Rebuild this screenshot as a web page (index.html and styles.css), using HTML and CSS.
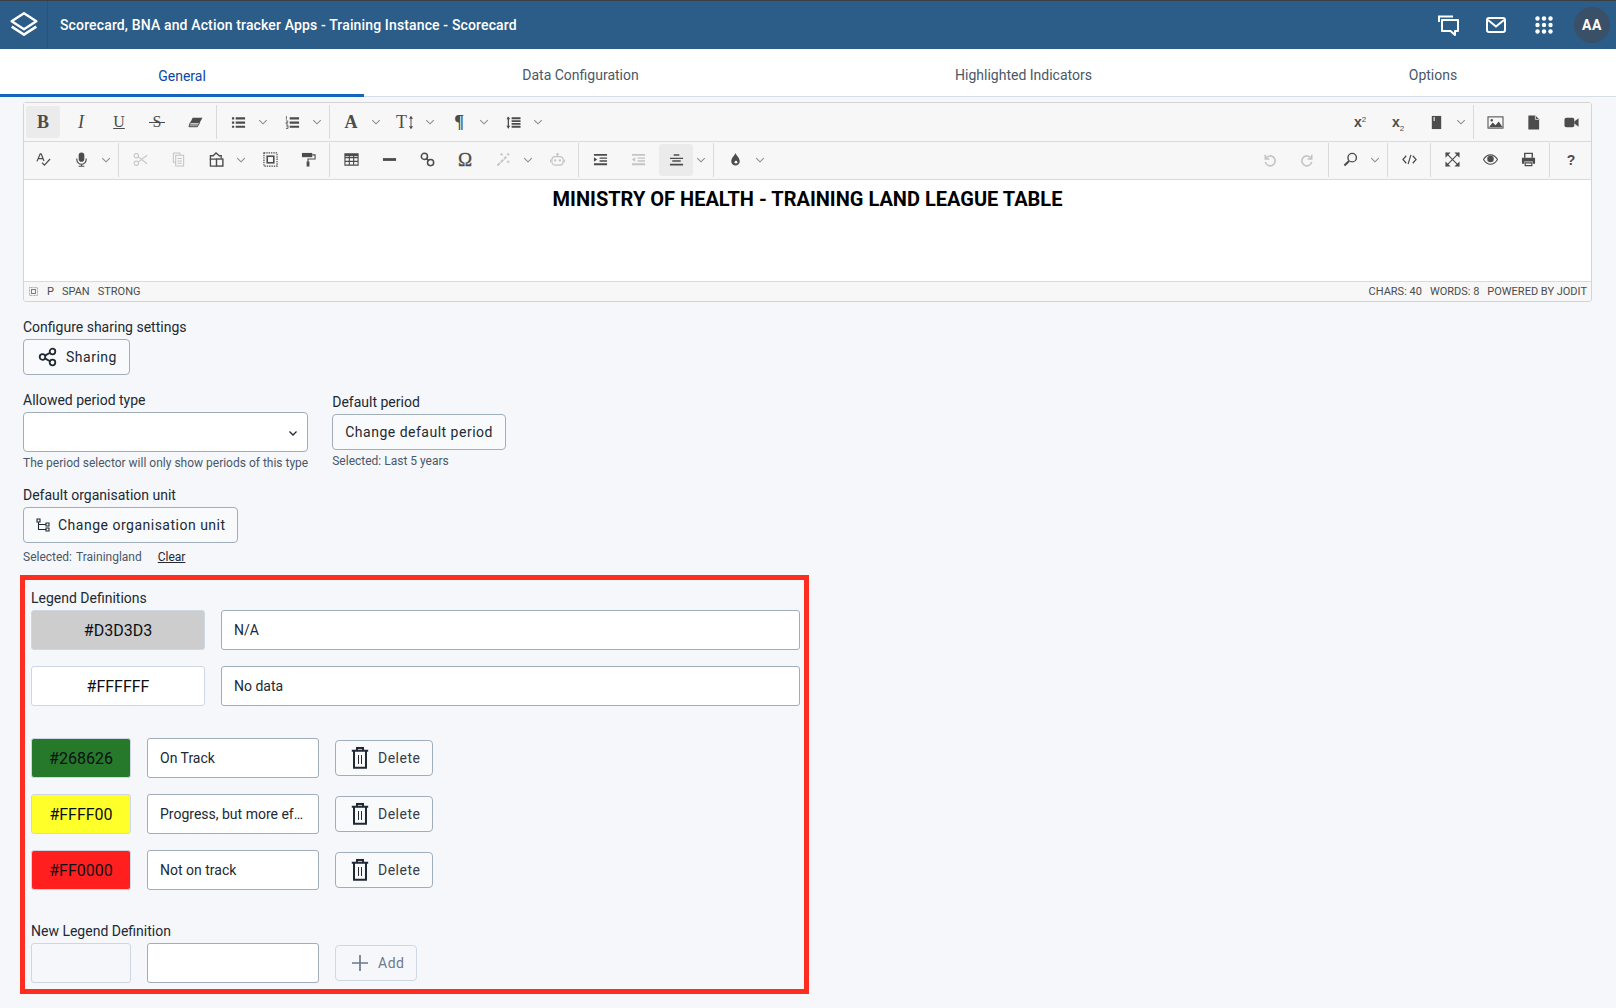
FILE: index.html
```html
<!DOCTYPE html>
<html lang="en">
<head>
<meta charset="utf-8">
<title>Scorecard</title>
<link rel="stylesheet" href="styles.css">
</head>
<body>
<svg class="defs" aria-hidden="true">
  <symbol id="chev" viewBox="0 0 16 16"><path d="M3 5.500l5 5 5-5" fill="none" stroke="currentColor" stroke-width="1.400"/></symbol>
  <symbol id="eraser" viewBox="0 0 16 16"><path d="M5 3h10.500l-3 5H2.500z" fill="currentColor"/><path d="M2.500 8h10L10 12.500H1z" fill="none" stroke="currentColor" stroke-width="1"/><path d="M2 9h10l-2.300 3.500H1z" fill="currentColor" opacity=".55"/></symbol>
  <symbol id="ul" viewBox="0 0 16 16"><path d="M1 2.500h2.400v2.200H1zM1 7h2.400v2.200H1zM1 11.500h2.400v2.200H1zM5 2.500h10v2.200H5zM5 7h10v2.200H5zM5 11.500h10v2.200H5z" fill="currentColor"/></symbol>
  <symbol id="ol" viewBox="0 0 16 16"><path d="M5 2.500h10v2.200H5zM5 7h10v2.200H5zM5 11.500h10v2.200H5z" fill="currentColor"/><path d="M1.500 1v4M1 6.300h2v1.600H1.200v1.500h2M1 10.800h2.200v3.600H1M1.500 12.600h1.600" fill="none" stroke="currentColor" stroke-width=".8"/></symbol>
  <symbol id="lh" viewBox="0 0 16 16"><path d="M6 2.500h9.500v2H6zM6 5.500h9.500v2H6zM6 8.500h9.500v2H6zM6 11.500h9.500v2H6z" fill="currentColor"/><path d="M2.500 2v12" stroke="currentColor" stroke-width="1.400"/><path d="M.5 4.500l2-3 2 3zM.5 11.500l2 3 2-3z" fill="currentColor"/></symbol>
  <symbol id="spell" viewBox="0 0 16 16"><path d="M1 10L4.500 2h1l3 7.500M2.500 7h4.500" fill="none" stroke="currentColor" stroke-width="1.300"/><path d="M6.500 11.500L9 14l6-6.500" fill="none" stroke="currentColor" stroke-width="1.300"/></symbol>
  <symbol id="mic" viewBox="0 0 16 16"><rect x="5" y="0.500" width="6" height="10" rx="3" fill="currentColor"/><path d="M3 7v1a5 5 0 0010 0V7M8 13v2M5 15.200h6" fill="none" stroke="currentColor" stroke-width="1.200"/></symbol>
  <symbol id="cut" viewBox="0 0 16 16"><circle cx="3.500" cy="4" r="2.300" fill="none" stroke="currentColor" stroke-width="1.100"/><circle cx="3.500" cy="12" r="2.300" fill="none" stroke="currentColor" stroke-width="1.100"/><path d="M5.500 5.200L15 12.500M5.500 10.800L15 3.500" fill="none" stroke="currentColor" stroke-width="1.100"/></symbol>
  <symbol id="copy" viewBox="0 0 16 16"><path d="M2.500 1h7v2.500M5 3.500h8.500V15H5zM2.500 1v10H5M7 7h4.500M7 9.500h4.500M7 12h4.500" fill="none" stroke="currentColor" stroke-width="1.100"/></symbol>
  <symbol id="paste" viewBox="0 0 16 16"><path d="M8 7.500H1.500V4h3L7.500 1l3.500 3h2V7" fill="none" stroke="currentColor" stroke-width="1.400"/><path d="M1.500 7v8H8" fill="none" stroke="currentColor" stroke-width="1.400"/><rect x="8" y="7.500" width="6.800" height="7.500" fill="none" stroke="currentColor" stroke-width="1.500"/></symbol>
  <symbol id="select" viewBox="0 0 16 16"><rect x="1" y="1" width="14" height="14" fill="none" stroke="currentColor" stroke-width="1.300" stroke-dasharray="1.500 1"/><rect x="4.500" y="4.500" width="7" height="7" fill="none" stroke="currentColor" stroke-width="1.700"/></symbol>
  <symbol id="paint" viewBox="0 0 16 16"><path d="M1 1h11v4.500H1z" fill="currentColor"/><path d="M12 3h3v4.500H7.500V10" fill="none" stroke="currentColor" stroke-width="1.200"/><path d="M6 10h3v5.500H6z" fill="currentColor"/></symbol>
  <symbol id="table" viewBox="0 0 16 16"><path d="M1 2h14v12H1zM1 6h14M1 10h14M5.700 2v12M10.300 2v12" fill="none" stroke="currentColor" stroke-width="1.200"/><path d="M1 2h14v2.500H1z" fill="currentColor"/></symbol>
  <symbol id="hr" viewBox="0 0 16 16"><path d="M1 6.500h14v3H1z" fill="currentColor"/></symbol>
  <symbol id="link" viewBox="0 0 16 16"><circle cx="4.700" cy="4.700" r="3.300" fill="none" stroke="currentColor" stroke-width="1.600"/><circle cx="11.300" cy="11.300" r="3.300" fill="none" stroke="currentColor" stroke-width="1.600"/><path d="M6.500 6.500l3 3" stroke="currentColor" stroke-width="1.600"/></symbol>
  <symbol id="magic" viewBox="0 0 16 16"><path d="M1.500 14.500L11 5" stroke="currentColor" stroke-width="2" stroke-dasharray="4 1"/><path d="M6 1v3M4.500 2.500h3M13 1v3M11.500 2.500h3M13 9v3M11.500 10.500h3" stroke="currentColor" stroke-width="1"/></symbol>
  <symbol id="robot" viewBox="0 0 16 16"><rect x="2" y="5" width="12" height="9" rx="3.500" fill="none" stroke="currentColor" stroke-width="1.300"/><circle cx="8" cy="2.300" r="1.300" fill="currentColor"/><path d="M8 3v2M0.500 8v3M15.500 8v3" stroke="currentColor" stroke-width="1.100"/><circle cx="5.500" cy="9" r="1.200" fill="currentColor"/><circle cx="10.500" cy="9" r="1.200" fill="currentColor"/></symbol>
  <symbol id="indent" viewBox="0 0 16 16"><path d="M1 2h14v2H1zM7 5.800h8v1.500H7zM7 8.800h8v1.500H7zM1 12h14v2H1zM1 5.500L4.500 8 1 10.500z" fill="currentColor"/></symbol>
  <symbol id="outdent" viewBox="0 0 16 16"><path d="M1 2h14v2H1zM7 5.800h8v1.500H7zM7 8.800h8v1.500H7zM1 12h14v2H1zM4.500 5.500L1 8l3.500 2.500z" fill="currentColor"/></symbol>
  <symbol id="center" viewBox="0 0 16 16"><path d="M1 12.500h14v2H1zM3.500 8.700h9v1.600h-9zM1 6h14v1.500H1zM5 2.500h6v1.600H5z" fill="currentColor"/></symbol>
  <symbol id="drop" viewBox="0 0 16 16"><path d="M8 1c1 3 4.500 5 4.500 9a4.500 4.500 0 01-9 0C3.500 6 7 4 8 1z" fill="currentColor"/><circle cx="8.500" cy="10.800" r="1.500" fill="#f7f7f7"/></symbol>
  <symbol id="book" viewBox="0 0 16 16"><path d="M3 1h10v14H3z" fill="currentColor"/><path d="M5.500 2v4.500" stroke="#f7f7f7" stroke-width="1.200"/></symbol>
  <symbol id="image" viewBox="0 0 18 16"><rect x="1" y="2" width="16" height="12" fill="none" stroke="currentColor" stroke-width="1.100"/><path d="M2 13l4-5 3 3 3.500-4 4 6z" fill="currentColor"/><circle cx="5" cy="5.500" r="1.300" fill="currentColor"/></symbol>
  <symbol id="file" viewBox="0 0 16 16"><path d="M2.500 0.500H10L14 4.500V15.500H2.500z" fill="currentColor"/><path d="M10 0.800v3.900h3.800" fill="none" stroke="#f7f7f7" stroke-width=".8"/></symbol>
  <symbol id="video" viewBox="0 0 16 16"><rect x="0.500" y="3" width="10.500" height="10" rx="2" fill="currentColor"/><path d="M11 7l4.500-3.500v9L11 9z" fill="currentColor"/></symbol>
  <symbol id="undo" viewBox="0 0 16 16"><path d="M3.500 3v4.500H8M4 7a5.300 5.300 0 11-.5 3.500" fill="none" stroke="currentColor" stroke-width="1.700"/></symbol>
  <symbol id="redo" viewBox="0 0 16 16"><path d="M12.500 3v4.500H8M12 7a5.300 5.300 0 10.500 3.500" fill="none" stroke="currentColor" stroke-width="1.700"/></symbol>
  <symbol id="search" viewBox="0 0 16 16"><circle cx="9.800" cy="6" r="4.500" fill="none" stroke="currentColor" stroke-width="1.500"/><path d="M6.500 9.500L1.500 14.500" stroke="currentColor" stroke-width="2.200"/></symbol>
  <symbol id="code" viewBox="0 0 16 16"><path d="M4.500 4L1 8l3.500 4M11.500 4L15 8l-3.500 4M9.500 3L6.500 13" fill="none" stroke="currentColor" stroke-width="1.300"/></symbol>
  <symbol id="full" viewBox="0 0 16 16"><path d="M1 1l14 14M15 1L1 15" stroke="currentColor" stroke-width="1.200"/><path d="M.5.500h5.500L.5 6zM15.500.500H10L15.500 6zM.5 15.500H6L.5 10zM15.500 15.500H10L15.500 10z" fill="currentColor"/></symbol>
  <symbol id="eye" viewBox="0 0 16 16"><path d="M0.500 8C3 4 5.500 3 8 3s5 1 7.500 5c-2.500 4-5 5-7.500 5S3 12 0.500 8z" fill="none" stroke="currentColor" stroke-width="1.200"/><circle cx="8" cy="7.500" r="3.500" fill="currentColor"/></symbol>
  <symbol id="print" viewBox="0 0 16 16"><path d="M4 6V1.500h8V6" fill="none" stroke="currentColor" stroke-width="1.500"/><path d="M1 6h14v6.500h-2.500V10h-9v2.500H1z" fill="currentColor"/><path d="M4.500 11.500h7v3h-7z" fill="none" stroke="currentColor" stroke-width="1.300"/></symbol>
  <symbol id="updown" viewBox="0 0 6 16"><path d="M3 1.500v13" stroke="currentColor" stroke-width="1"/><path d="M.8 4L3 1l2.200 3zM.8 12L3 15l2.200-3z" fill="currentColor"/></symbol>
  <symbol id="trash" viewBox="0 0 18 22"><path d="M6 2.800V1h6v1.800M.8 3.800h16.400M3 3.800V20.800h12V3.800" fill="none" stroke="currentColor" stroke-width="2"/><path d="M7.500 8v9M10.500 8v9" fill="none" stroke="currentColor" stroke-width="1"/></symbol>
</svg>

<header class="topbar">
  <div class="logo-cell">
    <svg class="logo" viewBox="0 0 28 28"><path d="M14 3L25.500 10.500 14 18 2.500 10.500z" fill="none" stroke="#fff" stroke-width="2.300" stroke-linejoin="round"/><path d="M2.500 15.500L14 23l11.500-7.500" fill="none" stroke="#fff" stroke-width="2.300" stroke-linejoin="round"/></svg>
  </div>
  <div class="app-title">Scorecard, BNA and Action tracker Apps - Training Instance - Scorecard</div>
  <div class="top-actions">
    <svg class="top-icon" viewBox="0 0 24 24"><path d="M3 9V3.500h14" fill="none" stroke="#fff" stroke-width="2"/><path d="M6 7h16v11h-3v4l-4.500-4H6z" fill="none" stroke="#fff" stroke-width="2" stroke-linejoin="round"/></svg>
    <svg class="top-icon" viewBox="0 0 24 24"><rect x="3" y="5" width="18" height="14" rx="2" fill="none" stroke="#fff" stroke-width="2"/><path d="M4 7l8 6.500L20 7" fill="none" stroke="#fff" stroke-width="2"/></svg>
    <svg class="top-icon" viewBox="0 0 24 24"><g fill="#fff"><circle cx="5.500" cy="5.500" r="2.200"/><circle cx="12" cy="5.500" r="2.200"/><circle cx="18.500" cy="5.500" r="2.200"/><circle cx="5.500" cy="12" r="2.200"/><circle cx="12" cy="12" r="2.200"/><circle cx="18.500" cy="12" r="2.200"/><circle cx="5.500" cy="18.500" r="2.200"/><circle cx="12" cy="18.500" r="2.200"/><circle cx="18.500" cy="18.500" r="2.200"/></g></svg>
    <div class="avatar">AA</div>
  </div>
</header>

<nav class="tabs">
  <div class="tab active">General</div>
  <div class="tab">Data Configuration</div>
  <div class="tab">Highlighted Indicators</div>
  <div class="tab">Options</div>
</nav>

<main class="page">
  <section class="editor">
    <div class="tb-row">
      <span class="tb on txt serif b xl">B</span><span class="tb txt serif i xl">I</span><span class="tb txt serif u md">U</span><span class="tb txt serif s md">S</span><span class="tb"><svg><use href="#eraser"/></svg></span>
      <i class="sep"></i>
      <span class="tb"><svg><use href="#ul"/></svg></span><span class="ch"><svg><use href="#chev"/></svg></span><span class="tb"><svg><use href="#ol"/></svg></span><span class="ch"><svg><use href="#chev"/></svg></span>
      <i class="sep"></i>
      <span class="tb txt serif b xl">A</span><span class="ch"><svg><use href="#chev"/></svg></span><span class="tb txt serif xl">T<svg class="ud"><use href="#updown"/></svg></span><span class="ch"><svg><use href="#chev"/></svg></span><span class="tb txt b serif xl">¶</span><span class="ch"><svg><use href="#chev"/></svg></span><span class="tb"><svg><use href="#lh"/></svg></span><span class="ch"><svg><use href="#chev"/></svg></span>
      <span class="spacer"></span>
      <span class="tb txt sans b"><span>x<sup>2</sup></span></span><span class="tb txt sans b"><span>x<sub>2</sub></span></span><span class="tb"><svg><use href="#book"/></svg></span><span class="ch"><svg><use href="#chev"/></svg></span>
      <i class="sep"></i>
      <span class="tb"><svg class="wide"><use href="#image"/></svg></span><span class="tb"><svg><use href="#file"/></svg></span><span class="tb"><svg><use href="#video"/></svg></span>
    </div>
    <div class="tb-row second">
      <span class="tb"><svg><use href="#spell"/></svg></span><span class="tb"><svg><use href="#mic"/></svg></span><span class="ch"><svg><use href="#chev"/></svg></span>
      <i class="sep"></i>
      <span class="tb off"><svg><use href="#cut"/></svg></span><span class="tb off"><svg><use href="#copy"/></svg></span><span class="tb"><svg><use href="#paste"/></svg></span><span class="ch"><svg><use href="#chev"/></svg></span><span class="tb"><svg><use href="#select"/></svg></span><span class="tb"><svg><use href="#paint"/></svg></span>
      <i class="sep"></i>
      <span class="tb"><svg><use href="#table"/></svg></span><span class="tb"><svg><use href="#hr"/></svg></span><span class="tb"><svg><use href="#link"/></svg></span><span class="tb txt serif omega">Ω</span><span class="tb off"><svg><use href="#magic"/></svg></span><span class="ch"><svg><use href="#chev"/></svg></span><span class="tb off"><svg><use href="#robot"/></svg></span>
      <i class="sep"></i>
      <span class="tb"><svg><use href="#indent"/></svg></span><span class="tb off"><svg><use href="#outdent"/></svg></span><span class="tb on"><svg><use href="#center"/></svg></span><span class="ch"><svg><use href="#chev"/></svg></span>
      <i class="sep"></i>
      <span class="tb"><svg><use href="#drop"/></svg></span><span class="ch"><svg><use href="#chev"/></svg></span>
      <span class="spacer"></span>
      <span class="tb off"><svg><use href="#undo"/></svg></span><span class="tb off"><svg><use href="#redo"/></svg></span>
      <i class="sep"></i>
      <span class="tb"><svg><use href="#search"/></svg></span><span class="ch"><svg><use href="#chev"/></svg></span>
      <i class="sep"></i>
      <span class="tb"><svg><use href="#code"/></svg></span>
      <i class="sep"></i>
      <span class="tb"><svg><use href="#full"/></svg></span><span class="tb"><svg><use href="#eye"/></svg></span><span class="tb"><svg><use href="#print"/></svg></span>
      <i class="sep"></i>
      <span class="tb txt sans b">?</span>
    </div>
    <div class="ed-body"><p class="ed-title">MINISTRY OF HEALTH - TRAINING LAND LEAGUE TABLE</p></div>
    <div class="ed-status">
      <svg class="sel-ico" viewBox="0 0 16 16"><use href="#select"/></svg>
      <span>P</span><span>SPAN</span><span>STRONG</span>
      <span class="spacer"></span>
      <span>CHARS: 40</span><span>WORDS: 8</span><span>POWERED BY JODIT</span>
    </div>
  </section>

  <div class="field sharing">
    <div class="label">Configure sharing settings</div>
    <button class="btn sharing-btn">
      <svg class="bi" viewBox="0 0 20 20"><circle cx="4.500" cy="10" r="2.800" fill="none" stroke="currentColor" stroke-width="1.800"/><circle cx="14.500" cy="4.500" r="2.800" fill="none" stroke="currentColor" stroke-width="1.800"/><circle cx="14.500" cy="15.500" r="2.800" fill="none" stroke="currentColor" stroke-width="1.800"/><path d="M7 8.600l5-2.800M7 11.400l5 2.800" stroke="currentColor" stroke-width="1.800"/></svg>
      Sharing
    </button>
  </div>

  <div class="period-row">
    <div class="field">
      <div class="label">Allowed period type</div>
      <div class="select"><svg viewBox="0 0 12 12"><path d="M2.500 4.500L6 8l3.500-3.500" fill="none" stroke="currentColor" stroke-width="1.300"/></svg></div>
      <div class="help">The period selector will only show periods of this type</div>
    </div>
    <div class="field default-period">
      <div class="label">Default period</div>
      <button class="btn">Change default period</button>
      <div class="help">Selected: Last 5 years</div>
    </div>
  </div>

  <div class="field org">
    <div class="label">Default organisation unit</div>
    <button class="btn org-btn">
      <svg class="oi" viewBox="0 0 14 14"><path d="M1 1h3v3H1zM10 5h3v3h-3zM10 10h3v3h-3zM2.500 4v7.500H10M2.500 6.500H10" fill="none" stroke="currentColor" stroke-width="1.100"/></svg>
      Change organisation unit
    </button>
    <div class="help"><span class="sel-name">Selected: <span class="sel-val">Trainingland</span></span><span class="clear">Clear</span></div>
  </div>

  <section class="legend-box">
    <div class="label small">Legend Definitions</div>
    <div class="lrow"><div class="swatch wide-sw grey">#D3D3D3</div><div class="input grow">N/A</div></div>
    <div class="lrow"><div class="swatch wide-sw white">#FFFFFF</div><div class="input grow">No data</div></div>
    <div class="lrow first-custom">
      <div class="swatch green">#268626</div><div class="input">On Track</div>
      <button class="btn del"><svg class="ti"><use href="#trash"/></svg>Delete</button>
    </div>
    <div class="lrow">
      <div class="swatch yellow">#FFFF00</div><div class="input">Progress, but more ef…</div>
      <button class="btn del"><svg class="ti"><use href="#trash"/></svg>Delete</button>
    </div>
    <div class="lrow">
      <div class="swatch red">#FF0000</div><div class="input">Not on track</div>
      <button class="btn del"><svg class="ti"><use href="#trash"/></svg>Delete</button>
    </div>
    <div class="label small new-label">New Legend Definition</div>
    <div class="lrow tight">
      <div class="swatch empty"></div><div class="input"></div>
      <button class="btn del disabled"><svg class="ai" viewBox="0 0 18 18"><path d="M9 1v16M1 9h16" stroke="currentColor" stroke-width="1.700"/></svg>Add</button>
    </div>
  </section>
</main>
</body>
</html>
```
FILE: styles.css
```css
* { box-sizing: border-box; }
html, body { margin: 0; height: 100%; }
body {
  width: 1616px;
  height: 1008px;
  overflow: hidden;
  background: #f6f7fa;
  color: #212934;
  font-family: Roboto, "Liberation Sans", sans-serif;
  font-size: 14px;
}
.defs { position: absolute; width: 0; height: 0; }

.topbar {
  height: 49px;
  display: flex;
  align-items: center;
  background: #2c5c88;
  border-top: 1px solid #3a3f44;
  color: #fff;
}
.logo-cell {
  width: 48px;
  height: 100%;
  display: flex;
  align-items: center;
  justify-content: center;
  border-right: 1px solid #28547c;
}
.logo { width: 30px; height: 30px; }
.app-title { margin-left: 12px; font-size: 14px; font-weight: 500; letter-spacing: .14px; }
.top-actions { margin-left: auto; display: flex; align-items: center; }
.top-icon { width: 24px; height: 24px; margin-right: 24px; }
.top-actions .top-icon:nth-child(3) { margin-right: 18px; }
.avatar {
  width: 36px;
  height: 36px;
  margin-right: 6px;
  border-radius: 50%;
  background: #3a5068;
  display: flex;
  align-items: center;
  justify-content: center;
  font-size: 14px;
  font-weight: 700;
  letter-spacing: .5px;
}

.tabs {
  height: 48px;
  display: flex;
  background: #fff;
  border-bottom: 1px solid #d5dde5;
}
.tab {
  display: flex;
  align-items: center;
  justify-content: center;
  color: #4a5768;
  font-size: 14px;
  padding-top: 4px;
}
.tabs .tab:nth-child(1) { flex: 0 0 364px; }
.tabs .tab:nth-child(2) { flex: 0 0 433px; }
.tabs .tab:nth-child(3) { flex: 0 0 453px; }
.tabs .tab:nth-child(4) { flex: 0 0 366px; }
.tab.active {
  color: #0d47a1;
  border-bottom: 3px solid #1565c0;
  margin-bottom: -1px;
  padding-top: 8px;
}

.page { padding: 5px 24px 0 23px; }

.editor {
  border: 1px solid #d4d4d4;
  border-radius: 3px;
  background: #fff;
}
.tb-row {
  height: 39px;
  display: flex;
  align-items: center;
  padding-right: 1px;
  background: #f7f7f7;
  border-bottom: 1px solid #dadada;
}
.tb-row.second { height: 38px; padding-bottom: 2px; }
.tb {
  position: relative;
  flex: 0 0 34px;
  height: 32px;
  margin: 0 2px;
  display: flex;
  align-items: center;
  justify-content: center;
  color: #4c4c4c;
  border-radius: 3px;
}
.tb svg { width: 15px; height: 15px; }
.tb svg.wide { width: 17px; height: 15px; }
.tb svg.ud { width: 6px; height: 15px; margin-left: 1px; }
.tb.on { background: #ebebeb; }
.tb.off { color: #c4c4c4; }
.txt { font-size: 15px; line-height: 1; }
.serif { font-family: "Liberation Serif", serif; }
.sans { font-family: "Liberation Sans", sans-serif; font-size: 14px; }
.md { font-size: 16px; }
.xl { font-size: 18px; }
.omega { font-size: 19px; font-weight: 400; -webkit-text-stroke: .3px currentColor; }
.b { font-weight: 700; }
.i { font-style: italic; }
.u { text-decoration: underline; }
.s::after {
  content: "";
  position: absolute;
  left: 9px;
  right: 9px;
  top: 16px;
  height: 1px;
  background: currentColor;
}
.tb sup, .tb sub { font-size: 8px; font-weight: 400; line-height: 0; }
.tb sup { vertical-align: 5px; }
.tb sub { vertical-align: -4px; }
.ch {
  flex: 0 0 16px;
  display: flex;
  align-items: center;
  justify-content: flex-start;
  color: #8a8a8a;
}
.ch svg { width: 12px; height: 12px; }
.sep {
  flex: 0 0 1px;
  height: 34px;
  margin: 0 2px;
  background: #dadada;
}
.spacer { flex: 1; }

.ed-body { height: 102px; padding-top: 7px; border-bottom: 1px solid #dadada; }
.ed-title {
  margin: 0;
  text-align: center;
  color: #000;
  font-size: 20px;
  font-weight: 700;
  line-height: 24px;
}
.ed-status {
  height: 19px;
  display: flex;
  align-items: center;
  gap: 8px;
  padding: 0 4px;
  background: #f7f7f7;
  border-radius: 0 0 3px 3px;
  color: #4c4c4c;
  font-size: 11px;
}
.sel-ico { width: 9px; height: 9px; margin: 0 1px; color: #777; }

.field { display: flex; flex-direction: column; }
.label { font-size: 14px; line-height: 18px; color: #212934; }
.btn {
  height: 36px;
  display: inline-flex;
  align-items: center;
  align-self: flex-start;
  padding: 0 12px;
  background: #f9fafb;
  border: 1px solid #a0adba;
  border-radius: 4px;
  color: #212934;
  font-family: inherit;
  font-size: 14px;
  letter-spacing: .5px;
}
.help { font-size: 12px; line-height: 14px; color: #4a5768; margin-top: 4px; }

.sharing { margin-top: 16px; }
.sharing .label { margin-bottom: 3px; }
.sharing-btn { padding: 0 12px 0 14px; }
.bi { width: 20px; height: 20px; margin-right: 8px; }

.period-row { display: flex; gap: 24px; margin-top: 16px; }
.select {
  width: 285px;
  height: 40px;
  margin-top: 3px;
  display: flex;
  align-items: center;
  justify-content: flex-end;
  padding-right: 8px;
  background: #fff;
  border: 1px solid #a0adba;
  border-radius: 4px;
}
.select svg { width: 12px; height: 12px; margin-top: 2px; }
.default-period { padding-top: 2px; }
.default-period .label { margin-bottom: 3px; }

.org { margin-top: 16px; }
.org .label { margin-bottom: 3px; }
.org-btn { padding: 0 11px 0 12px; }
.org .help { margin-top: 7px; }
.oi { width: 14px; height: 14px; margin-right: 8px; }
.sel-name { margin-right: 16px; }
.sel-val { margin-left: 1px; }
.clear { text-decoration: underline; color: #212934; }

.legend-box {
  width: 789px;
  height: 419px;
  margin: 11px 0 0 -3px;
  padding: 10px 4px 0 6px;
  border: 5px solid #ff2d20;
}
.label.small { line-height: 16px; margin-bottom: 4px; }
.lrow {
  display: flex;
  align-items: center;
  gap: 16px;
  margin-bottom: 16px;
}
.first-custom { margin-top: 32px; }
.tight { margin-bottom: 0; }
.new-label { margin-top: 33px; }
.swatch {
  flex: 0 0 100px;
  height: 40px;
  display: flex;
  align-items: center;
  justify-content: center;
  border: 1px solid #ced8e3;
  border-radius: 3px;
  font-size: 16px;
  color: #0b0f14;
}
.wide-sw { flex-basis: 174px; }
.grey { background: #cdcdcd; }
.white { background: #fff; }
.green { background: #26792a; }
.yellow { background: #ffff2a; }
.red { background: #ff1f1f; }
.empty { background: transparent; }
.input {
  flex: 0 0 172px;
  min-width: 0;
  height: 40px;
  line-height: 38px;
  padding: 0 12px;
  overflow: hidden;
  white-space: nowrap;
  background: #fff;
  border: 1px solid #a0adba;
  border-radius: 3px;
}
.input.grow { flex: 1 1 auto; }
.del { flex: none; align-self: center; padding: 0 12px 0 15px; color: #373e4a; }
.ti { width: 18px; height: 22px; margin-right: 9px; color: #212934; }
.disabled { border-color: #ced8e3; color: #6e7a8a; background: transparent; }
.ai { width: 18px; height: 18px; margin-right: 9px; }
```
